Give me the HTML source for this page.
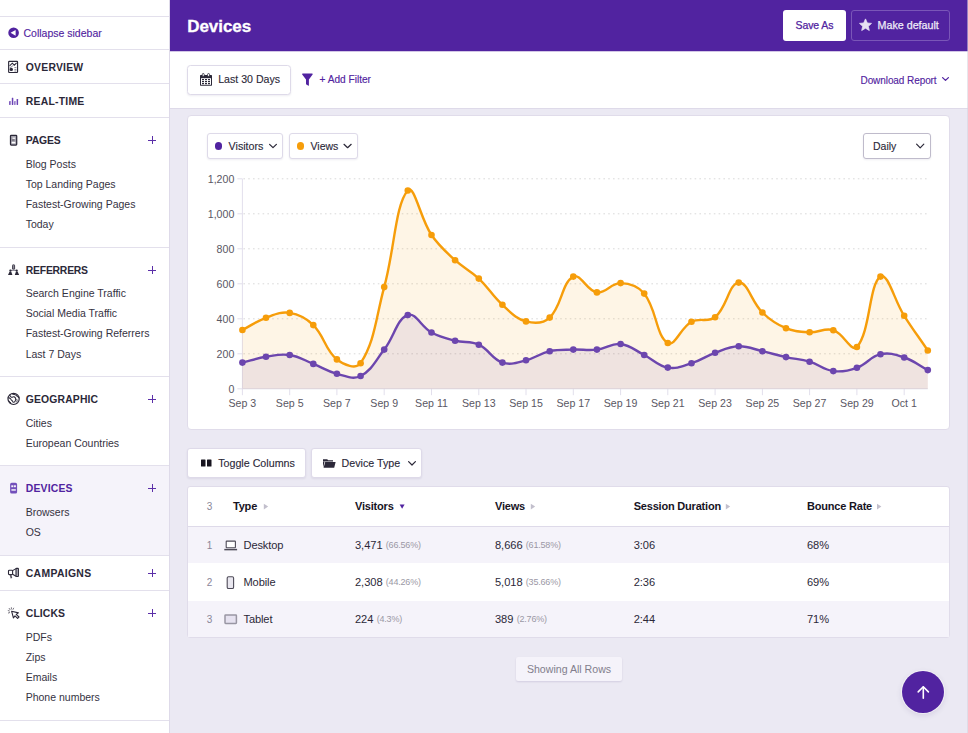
<!DOCTYPE html>
<html><head><meta charset="utf-8"><title>Devices</title>
<style>
*{box-sizing:border-box;margin:0;padding:0}
html,body{width:968px;height:733px;overflow:hidden}
body{font-family:"Liberation Sans",sans-serif;font-size:10.5px;letter-spacing:0;color:#2b2838;background:#ebe9f3;position:relative}
.abs{position:absolute}
/* sidebar */
#sb{position:absolute;left:0;top:0;width:170px;height:733px;background:#fff;border-right:1px solid #dedae9}
.hl{position:absolute;left:0;width:169px;height:1px;background:#e3e0ec}
.sh{position:absolute;left:25.8px;font-weight:700;font-size:10.4px;letter-spacing:0.3px;color:#2b2838;line-height:12px;white-space:nowrap}
.sl{position:absolute;left:25.7px;font-size:10.5px;color:#35323f;line-height:12px;white-space:nowrap}
.plus{position:absolute;left:148px;width:8px;height:8px}
.plus:before{content:"";position:absolute;left:0;top:3.5px;width:8px;height:1px;background:#5b2fa8}
.plus:after{content:"";position:absolute;top:0;left:3.5px;height:8px;width:1px;background:#5b2fa8}
.ic{position:absolute}
/* header */
#hd{position:absolute;left:170px;top:0;width:798px;height:51px;background:#5123a0}
#hd h1{position:absolute;left:17.2px;top:16.5px;font-size:17px;line-height:20px;font-weight:700;color:#fff;letter-spacing:-0.05px;-webkit-text-stroke:0.3px #fff}
.btn{position:absolute;border-radius:3px;white-space:nowrap}
#fb{position:absolute;left:170px;top:51px;width:798px;height:58px;background:#fff;border-bottom:1px solid #dedae9}
.card{position:absolute;background:#fff;border:1px solid #e0dcea;border-radius:4px}
.wbtn{position:absolute;background:#fff;border:1px solid #dedae9;border-radius:3px;box-shadow:0 1px 2px rgba(40,20,90,.08)}
.t{position:absolute;white-space:nowrap;line-height:12px;-webkit-text-stroke:0.12px currentColor}
svg text.ax{font-family:"Liberation Sans",sans-serif;font-size:10.6px;fill:#5a5763;letter-spacing:0}
</style></head><body>

<!-- SIDEBAR -->
<div id="sb">
  <div class="hl" style="top:16px"></div>
  <div class="hl" style="top:49px"></div>
  <div class="hl" style="top:83px"></div>
  <div class="hl" style="top:117px"></div>
  <div class="hl" style="top:247px"></div>
  <div class="hl" style="top:376px"></div>
  <div class="abs" style="left:0;top:466px;width:169px;height:89px;background:#f5f3fa"></div>
  <div class="hl" style="top:465px"></div>
  <div class="hl" style="top:555px"></div>
  <div class="hl" style="top:590px"></div>
  <div class="hl" style="top:720px"></div>

  <div class="t" style="left:23.5px;top:27px;color:#5123a0;font-size:10.5px">Collapse sidebar</div>
  <div class="sh" style="top:62px;letter-spacing:0.22px">OVERVIEW</div>
  <div class="sh" style="top:96px;letter-spacing:0.23px">REAL-TIME</div>

  <div class="sh" style="top:135px;letter-spacing:-0.18px">PAGES</div><div class="plus" style="top:136px"></div>
  <div class="sl" style="top:158px">Blog Posts</div>
  <div class="sl" style="top:178px">Top Landing Pages</div>
  <div class="sl" style="top:198px">Fastest-Growing Pages</div>
  <div class="sl" style="top:218px">Today</div>

  <div class="sh" style="top:265px;letter-spacing:-0.23px">REFERRERS</div><div class="plus" style="top:266px"></div>
  <div class="sl" style="top:287px">Search Engine Traffic</div>
  <div class="sl" style="top:307px">Social Media Traffic</div>
  <div class="sl" style="top:326.5px">Fastest-Growing Referrers</div>
  <div class="sl" style="top:348px">Last 7 Days</div>

  <div class="sh" style="top:394px;letter-spacing:0.14px">GEOGRAPHIC</div><div class="plus" style="top:395px"></div>
  <div class="sl" style="top:417px">Cities</div>
  <div class="sl" style="top:437px">European Countries</div>

  <div class="sh" style="top:483px;color:#5123a0;letter-spacing:0.19px">DEVICES</div><div class="plus" style="top:484px"></div>
  <div class="sl" style="top:505.5px">Browsers</div>
  <div class="sl" style="top:525.5px">OS</div>

  <div class="sh" style="top:568px;letter-spacing:0.32px">CAMPAIGNS</div><div class="plus" style="top:569px"></div>

  <div class="sh" style="top:608px;letter-spacing:0.1px">CLICKS</div><div class="plus" style="top:609px"></div>
  <div class="sl" style="top:631px">PDFs</div>
  <div class="sl" style="top:651px">Zips</div>
  <div class="sl" style="top:671px">Emails</div>
  <div class="sl" style="top:691px">Phone numbers</div>
  <!--SBICONS-->
</div>

<!-- HEADER -->
<div id="hd">
  <h1>Devices</h1>
  <div class="btn" style="left:613px;top:10px;width:63px;height:31px;background:#fff;color:#5123a0;font-size:10.5px;letter-spacing:-0.1px;line-height:31px;text-align:center;-webkit-text-stroke:0.25px #5123a0">Save As</div>
  <div class="btn" style="left:681px;top:10px;width:99px;height:31px;border:1px solid #7a56b8;color:#efeaf8;font-size:10.7px;line-height:29px;padding-left:25.6px;-webkit-text-stroke:0.25px #efeaf8">Make default</div>
  <!--HDICONS-->
</div>

<!-- FILTER BAR -->
<div id="fb">
  <div class="wbtn" style="left:17.3px;top:13.6px;width:103.8px;height:30.6px;border-radius:3.5px"></div>
  <div class="t" style="left:48.2px;top:22.1px;font-size:10.6px;color:#2b2838">Last 30 Days</div>
  <div class="t" style="left:149.6px;top:23.1px;font-size:10.1px;color:#5123a0;-webkit-text-stroke:0.15px #5123a0">+ Add Filter</div>
  <div class="t" style="left:690.5px;top:23.5px;font-size:10px;color:#5123a0;letter-spacing:-0.08px">Download Report</div>
  <!--FBICONS-->
</div>

<div class="abs" style="left:170px;top:51px;width:798px;height:1px;background:rgba(81,35,160,.26)"></div>
<!-- CHART CARD -->
<div class="card" style="left:187.4px;top:115.3px;width:762.4px;height:315.2px"></div>
<div class="wbtn" style="left:207px;top:133px;width:76px;height:26px"></div>
<div class="abs" style="left:214.6px;top:142.3px;width:7.6px;height:7.6px;border-radius:50%;background:#5123a0"></div>
<div class="t" style="left:228.6px;top:140px;font-size:10.7px">Visitors</div>
<div class="wbtn" style="left:289px;top:133px;width:69px;height:26px"></div>
<div class="abs" style="left:296.9px;top:142.3px;width:7.6px;height:7.6px;border-radius:50%;background:#f69d0a"></div>
<div class="t" style="left:310.5px;top:140px;font-size:10.5px">Views</div>
<div class="wbtn" style="left:863px;top:133px;width:68px;height:26px;border-color:#bfbbcb"></div>
<div class="t" style="left:873px;top:140px">Daily</div>

<svg class="abs" style="left:0;top:0" width="968" height="733" viewBox="0 0 968 733">
<line x1="237.4" x2="242.4" y1="388.8" y2="388.8" stroke="#e2dfec" stroke-width="1"/><text x="234.3" y="392.7" text-anchor="end" class="ax">0</text><line x1="237.4" x2="242.4" y1="353.8" y2="353.8" stroke="#e2dfec" stroke-width="1"/><line x1="243.4" x2="927.8" y1="353.8" y2="353.8" stroke="#d9d9d9" stroke-width="1" stroke-dasharray="1.6 3.2"/><text x="234.3" y="357.7" text-anchor="end" class="ax">200</text><line x1="237.4" x2="242.4" y1="318.8" y2="318.8" stroke="#e2dfec" stroke-width="1"/><line x1="243.4" x2="927.8" y1="318.8" y2="318.8" stroke="#d9d9d9" stroke-width="1" stroke-dasharray="1.6 3.2"/><text x="234.3" y="322.7" text-anchor="end" class="ax">400</text><line x1="237.4" x2="242.4" y1="283.8" y2="283.8" stroke="#e2dfec" stroke-width="1"/><line x1="243.4" x2="927.8" y1="283.8" y2="283.8" stroke="#d9d9d9" stroke-width="1" stroke-dasharray="1.6 3.2"/><text x="234.3" y="287.7" text-anchor="end" class="ax">600</text><line x1="237.4" x2="242.4" y1="248.8" y2="248.8" stroke="#e2dfec" stroke-width="1"/><line x1="243.4" x2="927.8" y1="248.8" y2="248.8" stroke="#d9d9d9" stroke-width="1" stroke-dasharray="1.6 3.2"/><text x="234.3" y="252.7" text-anchor="end" class="ax">800</text><line x1="237.4" x2="242.4" y1="213.8" y2="213.8" stroke="#e2dfec" stroke-width="1"/><line x1="243.4" x2="927.8" y1="213.8" y2="213.8" stroke="#d9d9d9" stroke-width="1" stroke-dasharray="1.6 3.2"/><text x="234.3" y="217.7" text-anchor="end" class="ax">1,000</text><line x1="237.4" x2="242.4" y1="178.8" y2="178.8" stroke="#e2dfec" stroke-width="1"/><line x1="243.4" x2="927.8" y1="178.8" y2="178.8" stroke="#d9d9d9" stroke-width="1" stroke-dasharray="1.6 3.2"/><text x="234.3" y="182.7" text-anchor="end" class="ax">1,200</text><line x1="242.4" x2="242.4" y1="388.8" y2="395.2" stroke="#e2dfec" stroke-width="1"/><text x="242.4" y="407" text-anchor="middle" class="ax">Sep 3</text><line x1="289.7" x2="289.7" y1="388.8" y2="395.2" stroke="#e2dfec" stroke-width="1"/><text x="289.7" y="407" text-anchor="middle" class="ax">Sep 5</text><line x1="336.9" x2="336.9" y1="388.8" y2="395.2" stroke="#e2dfec" stroke-width="1"/><text x="336.9" y="407" text-anchor="middle" class="ax">Sep 7</text><line x1="384.2" x2="384.2" y1="388.8" y2="395.2" stroke="#e2dfec" stroke-width="1"/><text x="384.2" y="407" text-anchor="middle" class="ax">Sep 9</text><line x1="431.5" x2="431.5" y1="388.8" y2="395.2" stroke="#e2dfec" stroke-width="1"/><text x="431.5" y="407" text-anchor="middle" class="ax">Sep 11</text><line x1="478.8" x2="478.8" y1="388.8" y2="395.2" stroke="#e2dfec" stroke-width="1"/><text x="478.8" y="407" text-anchor="middle" class="ax">Sep 13</text><line x1="526.0" x2="526.0" y1="388.8" y2="395.2" stroke="#e2dfec" stroke-width="1"/><text x="526.0" y="407" text-anchor="middle" class="ax">Sep 15</text><line x1="573.3" x2="573.3" y1="388.8" y2="395.2" stroke="#e2dfec" stroke-width="1"/><text x="573.3" y="407" text-anchor="middle" class="ax">Sep 17</text><line x1="620.6" x2="620.6" y1="388.8" y2="395.2" stroke="#e2dfec" stroke-width="1"/><text x="620.6" y="407" text-anchor="middle" class="ax">Sep 19</text><line x1="667.8" x2="667.8" y1="388.8" y2="395.2" stroke="#e2dfec" stroke-width="1"/><text x="667.8" y="407" text-anchor="middle" class="ax">Sep 21</text><line x1="715.1" x2="715.1" y1="388.8" y2="395.2" stroke="#e2dfec" stroke-width="1"/><text x="715.1" y="407" text-anchor="middle" class="ax">Sep 23</text><line x1="762.4" x2="762.4" y1="388.8" y2="395.2" stroke="#e2dfec" stroke-width="1"/><text x="762.4" y="407" text-anchor="middle" class="ax">Sep 25</text><line x1="809.6" x2="809.6" y1="388.8" y2="395.2" stroke="#e2dfec" stroke-width="1"/><text x="809.6" y="407" text-anchor="middle" class="ax">Sep 27</text><line x1="856.9" x2="856.9" y1="388.8" y2="395.2" stroke="#e2dfec" stroke-width="1"/><text x="856.9" y="407" text-anchor="middle" class="ax">Sep 29</text><line x1="904.2" x2="904.2" y1="388.8" y2="395.2" stroke="#e2dfec" stroke-width="1"/><text x="904.2" y="407" text-anchor="middle" class="ax">Oct 1</text><line x1="242.4" x2="242.4" y1="178.8" y2="389.3" stroke="#e2dfec" stroke-width="1"/><line x1="242.4" x2="927.8" y1="388.8" y2="388.8" stroke="#e2dfec" stroke-width="1"/>
<path d="M242.4,330.0C251.9,325.1 256.1,321.3 266.0,317.8C275.0,314.5 280.7,311.5 289.7,312.9C299.6,314.4 305.9,317.8 313.3,325.1C324.8,336.5 324.9,349.7 336.9,359.4C343.8,365.0 356.2,369.9 360.6,363.2C375.1,341.0 375.8,317.9 384.2,287.1C394.7,248.8 395.3,204.4 407.8,190.5C414.2,183.5 420.3,218.5 431.5,235.0C439.2,246.3 445.0,250.8 455.1,260.2C463.9,268.3 470.1,270.4 478.8,278.6C489.0,288.2 492.0,295.4 502.4,304.8C510.9,312.5 515.7,318.6 526.0,321.4C534.6,323.7 543.3,323.6 549.7,317.6C562.2,305.7 561.5,282.9 573.3,276.6C580.4,272.8 586.9,291.0 596.9,292.4C605.8,293.6 611.2,282.9 620.6,283.1C630.1,283.3 638.1,285.9 644.2,293.6C657.0,309.9 655.9,335.8 667.8,343.0C674.8,347.1 680.7,327.6 691.5,321.8C699.6,317.3 708.2,322.9 715.1,317.2C727.1,307.3 728.8,283.6 738.7,282.6C747.7,281.7 751.5,302.0 762.4,312.5C770.4,320.3 775.8,324.0 786.0,328.2C794.7,331.9 800.1,331.9 809.6,332.3C819.0,332.7 824.8,327.5 833.3,330.2C843.7,333.4 851.6,353.0 856.9,347.0C870.5,331.6 868.9,284.3 880.5,276.6C887.8,271.9 894.3,300.4 904.2,315.8C913.2,329.9 918.4,336.6 927.8,350.5L927.8,388.8L242.4,388.8Z" fill="rgba(246,157,10,0.1)"/>
<path d="M242.4,330.0C251.9,325.1 256.1,321.3 266.0,317.8C275.0,314.5 280.7,311.5 289.7,312.9C299.6,314.4 305.9,317.8 313.3,325.1C324.8,336.5 324.9,349.7 336.9,359.4C343.8,365.0 356.2,369.9 360.6,363.2C375.1,341.0 375.8,317.9 384.2,287.1C394.7,248.8 395.3,204.4 407.8,190.5C414.2,183.5 420.3,218.5 431.5,235.0C439.2,246.3 445.0,250.8 455.1,260.2C463.9,268.3 470.1,270.4 478.8,278.6C489.0,288.2 492.0,295.4 502.4,304.8C510.9,312.5 515.7,318.6 526.0,321.4C534.6,323.7 543.3,323.6 549.7,317.6C562.2,305.7 561.5,282.9 573.3,276.6C580.4,272.8 586.9,291.0 596.9,292.4C605.8,293.6 611.2,282.9 620.6,283.1C630.1,283.3 638.1,285.9 644.2,293.6C657.0,309.9 655.9,335.8 667.8,343.0C674.8,347.1 680.7,327.6 691.5,321.8C699.6,317.3 708.2,322.9 715.1,317.2C727.1,307.3 728.8,283.6 738.7,282.6C747.7,281.7 751.5,302.0 762.4,312.5C770.4,320.3 775.8,324.0 786.0,328.2C794.7,331.9 800.1,331.9 809.6,332.3C819.0,332.7 824.8,327.5 833.3,330.2C843.7,333.4 851.6,353.0 856.9,347.0C870.5,331.6 868.9,284.3 880.5,276.6C887.8,271.9 894.3,300.4 904.2,315.8C913.2,329.9 918.4,336.6 927.8,350.5" fill="none" stroke="#f69d0a" stroke-width="2.4" stroke-linecap="round" stroke-linejoin="round"/>
<g fill="#f69d0a"><circle cx="242.4" cy="330.0" r="3.3"/><circle cx="266.0" cy="317.8" r="3.3"/><circle cx="289.7" cy="312.9" r="3.3"/><circle cx="313.3" cy="325.1" r="3.3"/><circle cx="336.9" cy="359.4" r="3.3"/><circle cx="360.6" cy="363.2" r="3.3"/><circle cx="384.2" cy="287.1" r="3.3"/><circle cx="407.8" cy="190.5" r="3.3"/><circle cx="431.5" cy="235.0" r="3.3"/><circle cx="455.1" cy="260.2" r="3.3"/><circle cx="478.8" cy="278.6" r="3.3"/><circle cx="502.4" cy="304.8" r="3.3"/><circle cx="526.0" cy="321.4" r="3.3"/><circle cx="549.7" cy="317.6" r="3.3"/><circle cx="573.3" cy="276.6" r="3.3"/><circle cx="596.9" cy="292.4" r="3.3"/><circle cx="620.6" cy="283.1" r="3.3"/><circle cx="644.2" cy="293.6" r="3.3"/><circle cx="667.8" cy="343.0" r="3.3"/><circle cx="691.5" cy="321.8" r="3.3"/><circle cx="715.1" cy="317.2" r="3.3"/><circle cx="738.7" cy="282.6" r="3.3"/><circle cx="762.4" cy="312.5" r="3.3"/><circle cx="786.0" cy="328.2" r="3.3"/><circle cx="809.6" cy="332.3" r="3.3"/><circle cx="833.3" cy="330.2" r="3.3"/><circle cx="856.9" cy="347.0" r="3.3"/><circle cx="880.5" cy="276.6" r="3.3"/><circle cx="904.2" cy="315.8" r="3.3"/><circle cx="927.8" cy="350.5" r="3.3"/></g>
<path d="M242.4,362.6C251.9,360.2 256.5,358.3 266.0,356.8C275.4,355.3 280.5,353.6 289.7,355.0C299.4,356.5 303.9,360.2 313.3,363.9C322.8,367.7 327.1,371.2 336.9,373.8C346.0,376.1 353.0,379.9 360.6,376.0C371.9,370.2 375.5,360.8 384.2,349.6C394.5,336.4 396.7,319.0 407.8,315.0C415.6,312.1 421.3,326.9 431.5,332.5C440.2,337.2 445.5,338.2 455.1,340.7C464.4,343.1 470.3,340.8 478.8,344.7C489.2,349.5 491.9,359.1 502.4,362.6C510.8,365.3 516.9,362.5 526.0,360.3C535.8,357.9 539.9,353.4 549.7,351.2C558.8,349.1 563.8,349.9 573.3,349.6C582.7,349.3 587.6,350.7 596.9,349.6C606.5,348.5 611.4,343.0 620.6,344.0C630.4,345.1 634.9,350.4 644.2,355.0C653.8,359.8 657.9,365.9 667.8,367.6C676.8,369.2 682.4,366.1 691.5,363.2C701.3,360.2 705.4,356.2 715.1,352.8C724.3,349.4 729.2,346.6 738.7,346.3C748.1,346.0 753.0,349.0 762.4,351.2C771.9,353.4 776.5,355.0 786.0,357.1C795.4,359.2 800.5,359.0 809.6,361.7C819.4,364.6 823.5,369.9 833.3,371.1C842.4,372.3 848.1,371.0 856.9,367.8C867.0,364.2 870.5,356.4 880.5,354.2C889.4,352.2 895.3,354.5 904.2,357.5C914.2,360.8 918.4,365.0 927.8,370.1L927.8,388.8L242.4,388.8Z" fill="rgba(108,70,174,0.1)"/>
<path d="M242.4,362.6C251.9,360.2 256.5,358.3 266.0,356.8C275.4,355.3 280.5,353.6 289.7,355.0C299.4,356.5 303.9,360.2 313.3,363.9C322.8,367.7 327.1,371.2 336.9,373.8C346.0,376.1 353.0,379.9 360.6,376.0C371.9,370.2 375.5,360.8 384.2,349.6C394.5,336.4 396.7,319.0 407.8,315.0C415.6,312.1 421.3,326.9 431.5,332.5C440.2,337.2 445.5,338.2 455.1,340.7C464.4,343.1 470.3,340.8 478.8,344.7C489.2,349.5 491.9,359.1 502.4,362.6C510.8,365.3 516.9,362.5 526.0,360.3C535.8,357.9 539.9,353.4 549.7,351.2C558.8,349.1 563.8,349.9 573.3,349.6C582.7,349.3 587.6,350.7 596.9,349.6C606.5,348.5 611.4,343.0 620.6,344.0C630.4,345.1 634.9,350.4 644.2,355.0C653.8,359.8 657.9,365.9 667.8,367.6C676.8,369.2 682.4,366.1 691.5,363.2C701.3,360.2 705.4,356.2 715.1,352.8C724.3,349.4 729.2,346.6 738.7,346.3C748.1,346.0 753.0,349.0 762.4,351.2C771.9,353.4 776.5,355.0 786.0,357.1C795.4,359.2 800.5,359.0 809.6,361.7C819.4,364.6 823.5,369.9 833.3,371.1C842.4,372.3 848.1,371.0 856.9,367.8C867.0,364.2 870.5,356.4 880.5,354.2C889.4,352.2 895.3,354.5 904.2,357.5C914.2,360.8 918.4,365.0 927.8,370.1" fill="none" stroke="#6c46ae" stroke-width="2.4" stroke-linecap="round" stroke-linejoin="round"/>
<g fill="#6c46ae"><circle cx="242.4" cy="362.6" r="3.3"/><circle cx="266.0" cy="356.8" r="3.3"/><circle cx="289.7" cy="355.0" r="3.3"/><circle cx="313.3" cy="363.9" r="3.3"/><circle cx="336.9" cy="373.8" r="3.3"/><circle cx="360.6" cy="376.0" r="3.3"/><circle cx="384.2" cy="349.6" r="3.3"/><circle cx="407.8" cy="315.0" r="3.3"/><circle cx="431.5" cy="332.5" r="3.3"/><circle cx="455.1" cy="340.7" r="3.3"/><circle cx="478.8" cy="344.7" r="3.3"/><circle cx="502.4" cy="362.6" r="3.3"/><circle cx="526.0" cy="360.3" r="3.3"/><circle cx="549.7" cy="351.2" r="3.3"/><circle cx="573.3" cy="349.6" r="3.3"/><circle cx="596.9" cy="349.6" r="3.3"/><circle cx="620.6" cy="344.0" r="3.3"/><circle cx="644.2" cy="355.0" r="3.3"/><circle cx="667.8" cy="367.6" r="3.3"/><circle cx="691.5" cy="363.2" r="3.3"/><circle cx="715.1" cy="352.8" r="3.3"/><circle cx="738.7" cy="346.3" r="3.3"/><circle cx="762.4" cy="351.2" r="3.3"/><circle cx="786.0" cy="357.1" r="3.3"/><circle cx="809.6" cy="361.7" r="3.3"/><circle cx="833.3" cy="371.1" r="3.3"/><circle cx="856.9" cy="367.8" r="3.3"/><circle cx="880.5" cy="354.2" r="3.3"/><circle cx="904.2" cy="357.5" r="3.3"/><circle cx="927.8" cy="370.1" r="3.3"/></g>
</svg>

<!-- TABLE TOOLBAR -->
<div class="wbtn" style="left:187.4px;top:448.3px;width:118.2px;height:29.4px"></div>
<div class="t" style="left:218.2px;top:457px;font-size:10.7px">Toggle Columns</div>
<div class="wbtn" style="left:311.2px;top:448.3px;width:110.8px;height:29.4px"></div>
<div class="t" style="left:341.6px;top:457px;font-size:10.7px">Device Type</div>

<!-- TABLE -->
<div class="card" style="left:187.4px;top:486.3px;width:762.4px;height:151.5px;border-radius:3px"></div>
<div class="abs" style="left:188.4px;top:526px;width:760.4px;height:1px;background:#dedae9"></div>
<div class="abs" style="left:188.4px;top:527px;width:760.4px;height:36px;background:#f5f3fa"></div>
<div class="abs" style="left:188.4px;top:601px;width:760.4px;height:35.8px;background:#f5f3fa"></div>
<style>.th{position:absolute;top:500px;font-weight:700;font-size:11px;letter-spacing:-0.2px;color:#17141f;line-height:13px;white-space:nowrap}.td{position:absolute;font-size:11.1px;letter-spacing:-0.05px;color:#2b2838;line-height:13px;white-space:nowrap}.pc{font-size:9px;letter-spacing:-0.2px;color:#9b98a5;margin-left:3.3px;position:relative;top:-0.5px}.rn{position:absolute;font-size:10px;color:#8a8698;line-height:13px;width:10px;text-align:center;left:204.5px}</style>
<div class="rn" style="top:500px">3</div>
<div class="th" style="left:233px">Type</div>
<div class="th" style="left:355px">Visitors</div>
<div class="th" style="left:495px">Views</div>
<div class="th" style="left:633.7px">Session Duration</div>
<div class="th" style="left:807px">Bounce Rate</div>
<div class="rn" style="top:538.5px">1</div><div class="td" style="left:243.5px;top:538.5px;letter-spacing:-0.12px">Desktop</div><div class="td" style="left:355px;top:538.5px">3,471<span class="pc">(66.56%)</span></div><div class="td" style="left:495px;top:538.5px">8,666<span class="pc">(61.58%)</span></div><div class="td" style="left:633.7px;top:538.5px">3:06</div><div class="td" style="left:807px;top:538.5px">68%</div>
<div class="rn" style="top:575.5px">2</div><div class="td" style="left:243.5px;top:575.5px;letter-spacing:-0.12px">Mobile</div><div class="td" style="left:355px;top:575.5px">2,308<span class="pc">(44.26%)</span></div><div class="td" style="left:495px;top:575.5px">5,018<span class="pc">(35.66%)</span></div><div class="td" style="left:633.7px;top:575.5px">2:36</div><div class="td" style="left:807px;top:575.5px">69%</div>
<div class="rn" style="top:612.5px">3</div><div class="td" style="left:243.5px;top:612.5px;letter-spacing:-0.12px">Tablet</div><div class="td" style="left:355px;top:612.5px">224<span class="pc">(4.3%)</span></div><div class="td" style="left:495px;top:612.5px">389<span class="pc">(2.76%)</span></div><div class="td" style="left:633.7px;top:612.5px">2:44</div><div class="td" style="left:807px;top:612.5px">71%</div>


<!-- FOOTER -->
<div class="abs" style="left:516px;top:657px;width:106px;height:24px;background:#f5f3fa;border-radius:2px;box-shadow:0 1px 2px rgba(40,20,90,.12);text-align:center;line-height:24px;color:#827e8c;font-size:10.6px">Showing All Rows</div>
<div class="abs" style="left:902px;top:671px;width:42px;height:42px;border-radius:50%;background:#5123a0;box-shadow:0 0 0 1px rgba(255,255,255,.55),0 2px 6px rgba(40,20,90,.12)"></div>

<svg class="abs" style="left:0;top:0;pointer-events:none" width="968" height="733" viewBox="0 0 968 733">
<!-- collapse icon -->
<circle cx="13.6" cy="32.8" r="5.3" fill="#5123a0"/>
<path d="M15.6,29.9 L15.6,35.7 L10.6,32.8Z" fill="#fff"/>
<!-- overview icon -->
<g stroke="#2b2838" fill="none" stroke-width="1.15">
<rect x="8.65" y="61.35" width="8.9" height="11.1" rx="0.6"/>
<path d="M9.6,65.8 L12.3,63.2 L14.3,65.2 L16.6,62.9" stroke-width="1.05"/>
<path d="M9.6,68 L13.4,65.4" stroke-width="0.9" stroke="#8d8a97"/>
<path d="M14.4,67.6 H16.4 M14.4,69.6 H16.4 M14.4,71 H16.4" stroke-width="0.8" stroke="#6d6a78"/>
</g>
<circle cx="11.3" cy="69.4" r="1.7" fill="#2b2838"/>
<!-- real-time icon -->
<g fill="#6a42b4">
<rect x="9" y="101" width="1.7" height="4" rx="0.4" opacity=".85"/>
<rect x="11.8" y="97.7" width="1.5" height="7.3" rx="0.4"/>
<rect x="14.1" y="101" width="1.5" height="4" rx="0.4" opacity=".75"/>
<rect x="16.6" y="99" width="1.5" height="6" rx="0.4"/>
</g>
<!-- pages icon -->
<g>
<rect x="10.5" y="135.4" width="6.2" height="9.6" rx="0.7" fill="#a5a3ae" stroke="#2b2838" stroke-width="1.25"/>
<rect x="12.6" y="137.6" width="2.6" height="1.3" fill="#fff" opacity=".85"/>
<rect x="11.7" y="141.9" width="3.6" height="1.5" fill="#fff"/>
<path d="M11.9,140 H14.4" stroke="#55525e" stroke-width="0.9"/>
</g>
<!-- referrers icon -->
<g fill="#2b2838">
<rect x="12" y="264.2" width="3.1" height="5.6" rx="1.5" fill="#4f4c5a"/>
<rect x="13.2" y="265.2" width="0.7" height="3.4" fill="#a7a5af"/>
<path d="M10.4,270.4 H16.6" stroke="#8d8a97" stroke-width="1.1" fill="none"/>
<circle cx="10.4" cy="270.6" r="1.15"/>
<path d="M8,274.9 L9.6,271.4 H11.2 L12.4,274.9Z"/>
<circle cx="16.7" cy="270.6" r="1.15"/>
<path d="M14.8,274.9 L16,271.4 H17.6 L19.1,274.9Z"/>
</g>
<!-- geographic icon -->
<g fill="none" stroke="#2b2838" stroke-linecap="round" stroke-linejoin="round">
<circle cx="13.6" cy="398.9" r="5.6" stroke-width="1.2"/>
<path d="M9.6,395.2 C10.6,395.6 10.4,396.8 11.4,397.2 C12.8,397.6 13,396.2 14.2,396.8 C15.6,397.6 16,399.4 15.2,401 C14.6,402.4 13,402.8 12.6,401.4 C12.3,400.2 11.2,400.4 10.8,399.2 C10.5,398.2 9.4,398.4 8.9,397.6" stroke-width="1.05"/>
<path d="M12.4,393.9 C13.6,394.8 15.2,394.4 16.2,395.4 C17.2,396.4 18,396.6 18.6,397.6" stroke-width="1.05"/>
<path d="M8.8,400.6 C9.6,401.4 9.8,402.4 10.8,403" stroke-width="1"/>
<path d="M16.8,399.4 C17.4,400.2 17.2,401.2 16.6,402" stroke-width="0.9"/>
</g>
<!-- devices icon -->
<g>
<rect x="10.1" y="482.8" width="7" height="10.7" rx="1.6" fill="#7350bb"/>
<rect x="11.3" y="485.3" width="2" height="1.9" fill="#f5f3fa"/>
<rect x="13.9" y="485.3" width="2" height="1.9" fill="#f5f3fa"/>
<rect x="11.4" y="489.2" width="4.4" height="1.5" fill="#f5f3fa"/>
</g>
<!-- campaigns icon -->
<g stroke="#2b2838" fill="none" stroke-width="1.1" stroke-linejoin="round">
<rect x="8.5" y="570.2" width="4.1" height="4.4" rx="0.8"/>
<path d="M12.6,570.6 L16,568.6 M12.6,574.2 L16,576.3"/>
<rect x="16" y="568.4" width="2.4" height="8.1" rx="0.5" fill="#b9b7c0"/>
<path d="M10.6,574.8 L11.4,578.2" stroke-width="1.6" stroke="#55525e"/>
</g>
<!-- clicks icon -->
<g stroke="#2b2838" fill="none" stroke-linejoin="round" stroke-linecap="round">
<path d="M11.6,611.2 L18.4,612.9 L16.2,614.4 L19,617 L17.6,618.4 L15,615.8 L13.4,617.9Z" stroke-width="1.1" fill="#fff"/>
<path d="M9.2,608.4 L10,609.6 M11.4,607.7 L11.4,609 M13.6,608.2 L13,609.4 M8.2,610.6 L9.4,611 M8.4,613 L9.6,612.6" stroke-width="0.8" stroke="#55525e"/>
</g>

<!-- star in Make default -->
<path d="M865.5,18.9 L867.3,23 L871.5,23.4 L868.3,26.3 L869.3,30.5 L865.5,28.2 L861.7,30.5 L862.7,26.3 L859.5,23.4 L863.7,23Z" fill="#e6e0f2" stroke="#e6e0f2" stroke-width="0.8" stroke-linejoin="round"/>

<!-- calendar -->
<g fill="#2b2838">
<rect x="200" y="75" width="12" height="10.7" rx="0.6"/>
<rect x="201" y="78.2" width="10" height="6.6" fill="#fff"/>
<rect x="202.3" y="73.5" width="1.9" height="3" rx="0.9" fill="#fff" stroke="#2b2838" stroke-width="0.8"/>
<rect x="207.6" y="73.5" width="1.9" height="3" rx="0.9" fill="#fff" stroke="#2b2838" stroke-width="0.8"/>
<g>
<rect x="202" y="79" width="2" height="1.2"/><rect x="205" y="79" width="2" height="1.2"/><rect x="208" y="79" width="2" height="1.2"/>
<rect x="202" y="81" width="2" height="1.2"/><rect x="205" y="81" width="2" height="1.2"/><rect x="208" y="81" width="2" height="1.2"/>
<rect x="202" y="83" width="2" height="1.2"/><rect x="205" y="83" width="2" height="1.2"/><rect x="208" y="83" width="2" height="1.2"/>
</g>
</g>
<!-- funnel -->
<path d="M302.6,73.4 H312.2 Q313.2,73.6 312.6,74.6 L308.9,79.6 V85.2 Q308.8,86 308,85.6 L306,84.2 V79.6 L302.2,74.6 Q301.7,73.6 302.6,73.4Z" fill="#5123a0"/>
<!-- download chevron -->
<path d="M942.6,77.6 L945.5,80.4 L948.4,77.6" fill="none" stroke="#5123a0" stroke-width="1.3" stroke-linecap="round" stroke-linejoin="round"/>

<!-- chart button chevrons -->
<g fill="none" stroke="#2b2838" stroke-width="1.2" stroke-linecap="round" stroke-linejoin="round">
<path d="M269.6,144.3 L273,147.7 L276.4,144.3"/>
<path d="M344,144.3 L347.6,147.7 L351.2,144.3"/>
<path d="M916.6,144.2 L920.2,147.8 L923.8,144.2"/>
<path d="M408.6,461.6 L412,465 L415.4,461.6"/>
</g>

<!-- toggle columns icon -->
<rect x="201" y="459.4" width="4.5" height="7" rx="0.5" fill="#17141f"/>
<rect x="207" y="459.4" width="4.5" height="7" rx="0.5" fill="#17141f"/>
<!-- folder icon -->
<g fill="#2b2838">
<path d="M323,459.2 H327.2 L328.2,460.3 H333 V461.4 H323Z"/>
<path d="M325.2,462.1 H335.6 L334.2,467.8 H323.6Z"/>
<path d="M323,461.4 V467.4 L324.5,462.1Z"/>
</g>

<!-- sort arrows -->
<g fill="#c2bfcc">
<path d="M263.8,503.7 L268.2,506.6 L263.8,509.5Z"/>
<path d="M530.8,503.7 L535.1999999999999,506.6 L530.8,509.5Z"/>
<path d="M725.8,503.7 L730.1999999999999,506.6 L725.8,509.5Z"/>
<path d="M877,503.7 L881.4,506.6 L877,509.5Z"/>
</g>
<path d="M399.6,504.6 H404.6 L402.1,508.8Z" fill="#5123a0"/>

<!-- device icons -->
<g fill="none" stroke="#4d4a57" stroke-width="1.1">
<rect x="226.2" y="541.1" width="9.2" height="6.6" rx="0.5" fill="#fff"/>
<path d="M224.3,549.6 H237.1" stroke-width="1.5"/>
<rect x="227.2" y="576.7" width="6.4" height="11.8" rx="1.3" fill="#e9e7ef"/>
<rect x="225" y="615" width="11.4" height="8.4" rx="0.6" fill="#e6e2f0" stroke="#9996a3" stroke-width="1.5"/>
</g>

<!-- scroll top arrow -->
<g fill="none" stroke="#fff" stroke-width="1.6" stroke-linecap="round" stroke-linejoin="round">
<path d="M923.3,698.2 V687"/>
<path d="M918.2,691.9 L923.3,686.8 L928.4,691.9"/>
</g>

</svg>
<div class="abs" style="left:967px;top:0;width:1px;height:733px;background:rgba(214,210,220,.55)"></div>
</body></html>
